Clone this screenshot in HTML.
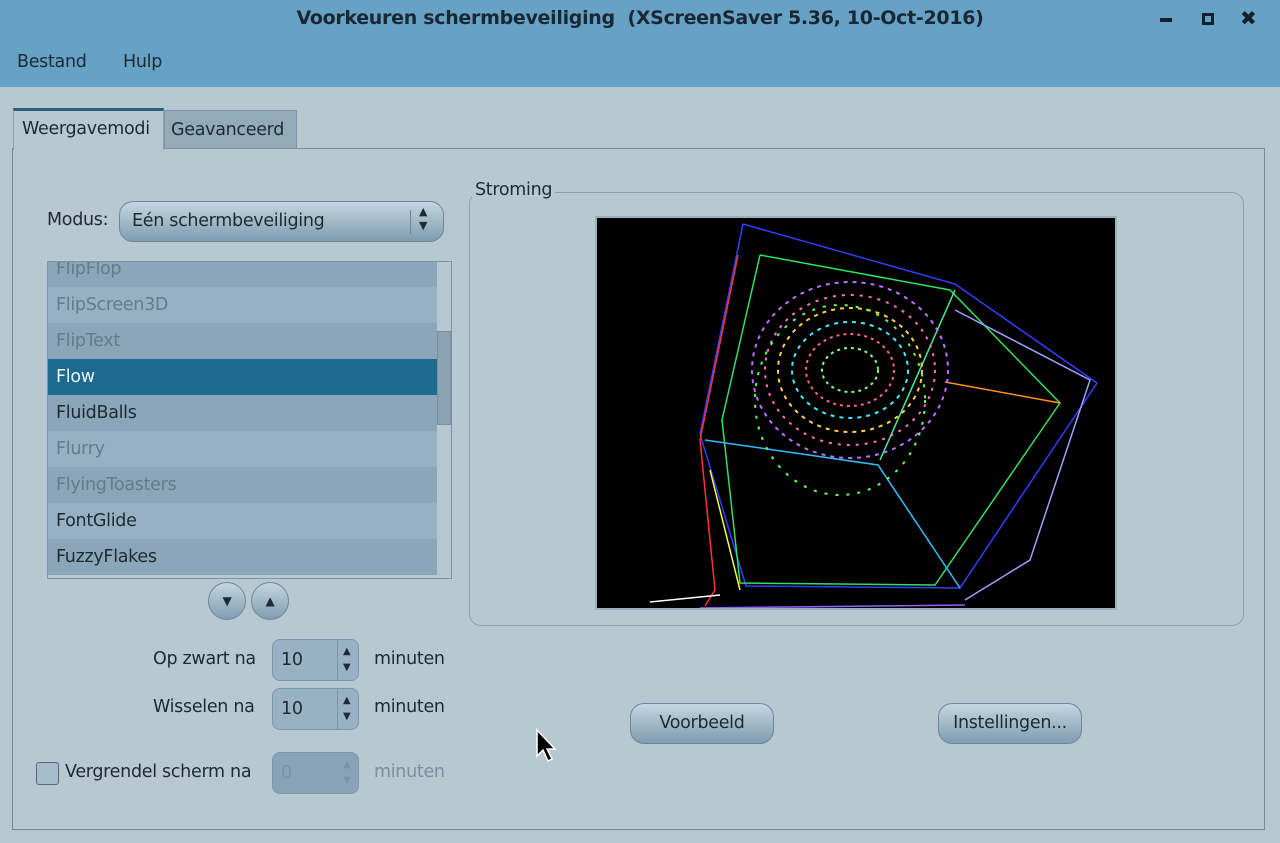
<!DOCTYPE html>
<html><head><meta charset="utf-8"><style>
*{box-sizing:border-box;margin:0;padding:0}
body{width:1280px;height:843px;background:#b7c8d1;font-family:"DejaVu Sans","Liberation Sans",sans-serif;font-size:17.5px;letter-spacing:-0.3px;color:#1d2a33;position:relative;overflow:hidden}
.a{position:absolute}
.title{left:0;top:0;width:1280px;height:40px;background:#66a2c6;}
.menu{left:0;top:40px;width:1280px;height:47px;background:#66a2c6;}
.btn{background:linear-gradient(#c4d6e1,#7f9db1);border:1px solid #6d8799;border-radius:12px;text-align:center;}
.row{position:absolute;left:0;width:389px;height:36px;padding-left:8px;line-height:36px;}
.d{background:#8ba6b8}.l{background:#95b1c3}
.g{color:#637c8c}
.spin{border:1px solid #7c97a8;border-radius:8px;background:#98b2c3;}
</style></head><body>
<div class="a title"></div>
<div class="a" style="left:0;top:7px;width:1280px;text-align:center;font-weight:bold;font-size:19px;color:#1a2630">Voorkeuren schermbeveiliging&nbsp; (XScreenSaver 5.36, 10-Oct-2016)</div>
<div class="a" style="left:1160px;top:18px;width:12px;height:4px;background:#13202a"></div>
<div class="a" style="left:1202px;top:13px;width:12px;height:12px;border:3px solid #13202a"></div>
<div class="a" style="left:1240px;top:6px;font-weight:bold;font-size:20px;color:#13202a">✖</div>
<div class="a menu"></div>
<div class="a" style="left:17px;top:52px">Bestand</div>
<div class="a" style="left:123px;top:52px">Hulp</div>

<div class="a" style="left:12px;top:148px;width:1253px;height:682px;border:1px solid #73899a"></div>
<div class="a" style="left:13px;top:108px;width:151px;height:42px;background:#b7c8d1;border:1px solid #8aa0ae;border-top:3px solid #2a5f80;border-bottom:none;padding:8px 0 0 8px">Weergavemodi</div>
<div class="a" style="left:164px;top:110px;width:133px;height:39px;background:#93aab9;border:1px solid #7b93a3;padding:9px 0 0 6px">Geavanceerd</div>

<div class="a" style="left:47px;top:210px">Modus:</div>
<div class="a btn" style="left:119px;top:201px;width:325px;height:41px;border-radius:14px;text-align:left;padding:9px 0 0 12px">Eén schermbeveiliging</div>
<div class="a" style="left:410px;top:210px;width:1px;height:24px;background:#6d8799"></div>
<div class="a" style="left:419px;top:205px;font-size:11px;line-height:14px">▲<br>▼</div>

<div class="a" style="left:47px;top:261px;width:405px;height:318px;border:1px solid #7c95a5;background:#b7c8d1;overflow:hidden">
<div class="row d g" style="top:-11px">FlipFlop</div>
<div class="row l g" style="top:25px">FlipScreen3D</div>
<div class="row d g" style="top:61px">FlipText</div>
<div class="row" style="top:97px;background:#1d6a8f;color:#eef4f8">Flow</div>
<div class="row d" style="top:133px">FluidBalls</div>
<div class="row l g" style="top:169px">Flurry</div>
<div class="row d g" style="top:205px">FlyingToasters</div>
<div class="row l" style="top:241px">FontGlide</div>
<div class="row d" style="top:277px">FuzzyFlakes</div>
<div class="a" style="left:389px;top:69px;width:14px;height:94px;background:#8aa2b2;border:1px solid #7890a0"></div>
</div>
<div class="a btn" style="left:208px;top:582px;width:38px;height:38px;border-radius:50%;font-size:12px;line-height:36px">▼</div>
<div class="a btn" style="left:251px;top:582px;width:38px;height:38px;border-radius:50%;font-size:12px;line-height:36px">▲</div>

<div class="a" style="left:153px;top:649px">Op zwart na</div>
<div class="a spin" style="left:272px;top:639px;width:87px;height:42px;padding:10px 0 0 8px">10</div>
<div class="a" style="left:337px;top:640px;width:1px;height:40px;background:#7c97a8"></div>
<div class="a" style="left:343px;top:644px;font-size:10px;line-height:16px">▲<br>▼</div>
<div class="a" style="left:374px;top:649px">minuten</div>
<div class="a" style="left:153px;top:697px">Wisselen na</div>
<div class="a spin" style="left:272px;top:688px;width:87px;height:42px;padding:10px 0 0 8px">10</div>
<div class="a" style="left:337px;top:689px;width:1px;height:40px;background:#7c97a8"></div>
<div class="a" style="left:343px;top:693px;font-size:10px;line-height:16px">▲<br>▼</div>
<div class="a" style="left:374px;top:697px">minuten</div>
<div class="a" style="left:36px;top:762px;width:23px;height:23px;border:1px solid #52697a;border-radius:3px;background:#a4bccb"></div>
<div class="a" style="left:65px;top:762px">Vergrendel scherm na</div>
<div class="a spin" style="left:272px;top:752px;width:87px;height:42px;padding:10px 0 0 8px;background:#88a3b5;color:#7893a5">0</div>
<div class="a" style="left:343px;top:757px;font-size:10px;line-height:16px;color:#7893a5">▲<br>▼</div>
<div class="a" style="left:374px;top:762px;color:#7790a1">minuten</div>

<div class="a" style="left:469px;top:192px;width:775px;height:434px;border:1px solid #8aa0ae;border-radius:12px"></div>
<div class="a" style="left:472px;top:180px;background:#b7c8d1;padding:0 3px">Stroming</div>
<div class="a" style="left:595px;top:216px;width:522px;height:394px;background:#000;border:2px solid #9ab0bd">
<svg width="518" height="390" viewBox="597 218 518 390" fill="none" stroke-width="1.5">
<polyline points="743,224 955,284 1097,383 960,588 746,586 700,434 743,224" stroke="#3040ff"/>
<polyline points="760,255 950,290 1060,403 935,585 740,583 722,420 760,255" stroke="#30e060"/>
<polyline points="738,255 700,440 715,590 705,606" stroke="#ff3030"/>
<polyline points="705,440 878,465 960,588" stroke="#30c0ff"/>
<polyline points="880,460 955,290" stroke="#40f0a0"/>
<polyline points="945,382 1060,403" stroke="#ff9020"/>
<polyline points="700,608 965,605" stroke="#9060ff"/>
<polyline points="650,602 720,595" stroke="#ffffff"/>
<polyline points="710,470 740,590" stroke="#ffff40"/>
<polyline points="955,310 1090,380 1030,560 965,600" stroke="#a0a0ff"/>
<ellipse cx="850" cy="370" rx="98" ry="88" stroke="#c070ff" stroke-dasharray="4 5" stroke-width="2"/>
<ellipse cx="850" cy="370" rx="85" ry="75" stroke="#ff70c0" stroke-dasharray="3 6" stroke-width="2"/>
<ellipse cx="850" cy="370" rx="72" ry="62" stroke="#ffd040" stroke-dasharray="4 5" stroke-width="2"/>
<ellipse cx="850" cy="370" rx="58" ry="48" stroke="#40f0ff" stroke-dasharray="4 5" stroke-width="2"/>
<ellipse cx="850" cy="370" rx="44" ry="36" stroke="#ff60a0" stroke-dasharray="3 4" stroke-width="2"/>
<ellipse cx="850" cy="370" rx="28" ry="22" stroke="#80ff80" stroke-dasharray="3 4" stroke-width="2"/>
<ellipse cx="840" cy="400" rx="85" ry="95" stroke="#60ff60" stroke-dasharray="3 8" stroke-width="2"/>
</svg></div>

<div class="a btn" style="left:630px;top:703px;width:144px;height:41px;border-radius:14px;line-height:39px">Voorbeeld</div>
<div class="a btn" style="left:938px;top:703px;width:144px;height:41px;border-radius:14px;line-height:39px">Instellingen...</div>
<svg class="a" style="left:535px;top:728px" width="26" height="36" viewBox="0 0 26 36"><path d="M2 2 L2 28 L8 22 L13 33 L17 31 L12 21 L20 21 Z" fill="#000" stroke="#fff" stroke-width="1.5"/></svg>
</body></html>
